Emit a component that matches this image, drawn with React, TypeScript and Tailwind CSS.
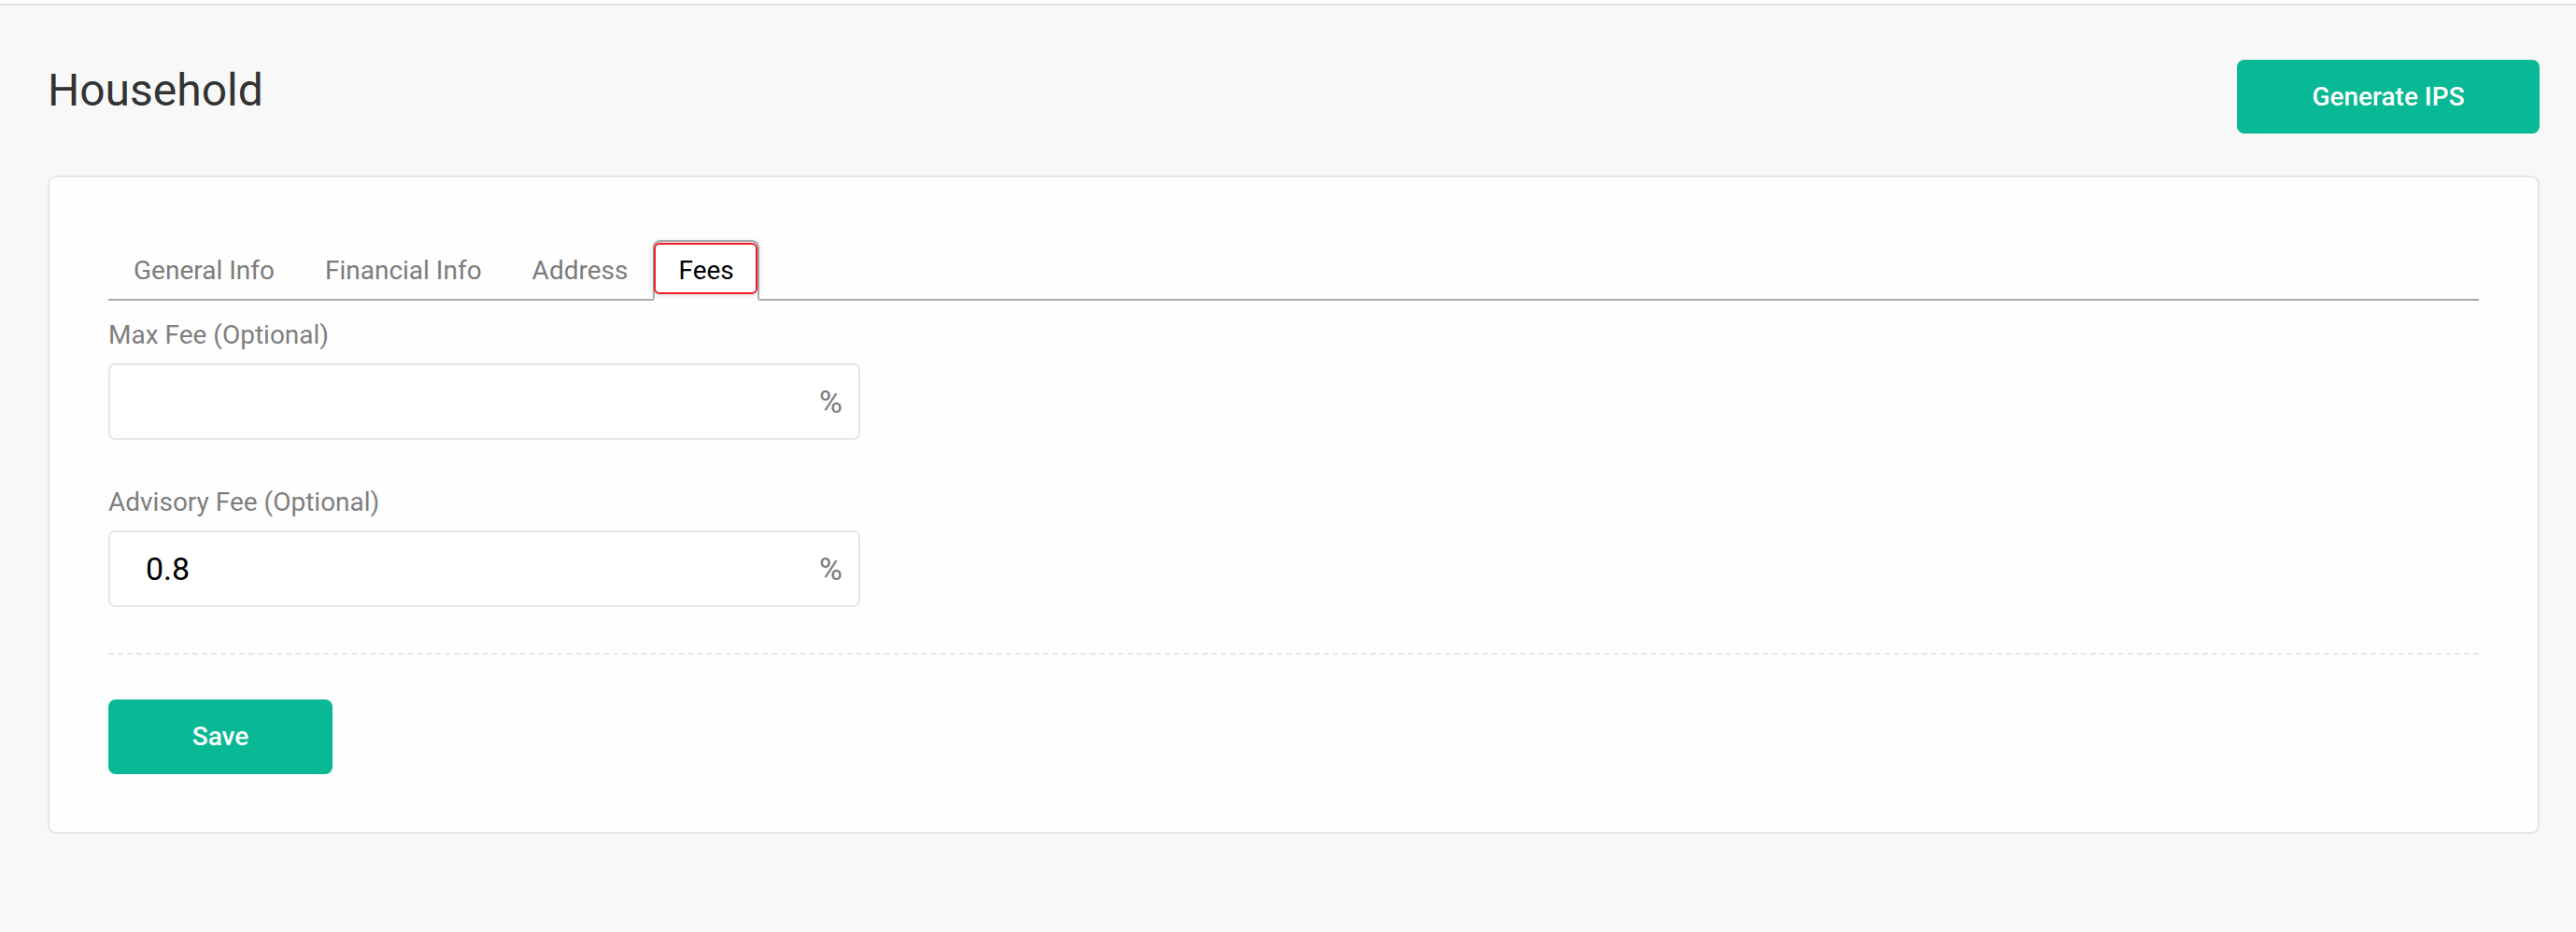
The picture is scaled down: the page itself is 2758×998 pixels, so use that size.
import { useState } from 'react';

const tabs = ['General Info', 'Financial Info', 'Address', 'Fees'];

function FeeInput({ label, value }: { label: string; value: string }) {
  return (
    <div>
      <label className="block text-[28px] leading-none text-[#7f7f7f]">{label}</label>
      <div className="mt-[16px] flex h-[82px] w-[805px] items-center rounded-[7px] border-2 border-[#e6e6e6] bg-white pl-[38px] pr-[17px]">
        <input
          defaultValue={value}
          className="min-w-0 flex-1 bg-transparent text-[34px] leading-none text-black outline-none"
        />
        <span className="text-[34px] leading-none text-[#7a7a7a]">%</span>
      </div>
    </div>
  );
}

export default function App() {
  const [active, setActive] = useState('Fees');

  return (
    <div className="min-h-screen bg-[#f8f8f8] font-['Roboto',sans-serif]">
      {/* top edge */}
      <div className="h-[4px] bg-[#fafafa]" />
      <div className="h-[2px] bg-[#e3e3e3]" />

      <div className="ml-[51px] mr-[39px]">
        {/* Header */}
        <div className="flex items-start justify-between pt-[58px] mb-[45px]">
          <h1 className="mt-[9px] text-[48px] font-normal leading-none text-[#333333]">Household</h1>
          <button className="h-[79px] w-[324px] rounded-[8px] bg-[#09b894] text-[28px] font-medium text-white">
            Generate IPS
          </button>
        </div>

        {/* Card */}
        <div className="rounded-[9px] border-2 border-[#e6e6e6] bg-[#fefefe] px-[63px] pt-[67px] pb-[62px]">
          {/* Tabs */}
          <div className="flex border-b-2 border-[#a8a8a8]">
            {tabs.map((tab) => {
              const isActive = tab === active;
              return (
                <button
                  key={tab}
                  type="button"
                  onClick={() => setActive(tab)}
                  className={`relative -mb-[2px] border-2 px-[25px] pt-[17px] pb-[16px] text-[28px] leading-none ${
                    isActive
                      ? 'rounded-t-[8px] border-[#b0b0b0] border-b-white bg-white text-black'
                      : 'border-transparent text-[#7c7c7c]'
                  }`}
                >
                  {isActive && (
                    <span className="absolute -left-[1px] right-0 top-[1px] bottom-[5px] rounded-[6px] border-2 border-[#ee1c25] shadow-[0_0_5px_2px_rgba(0,0,0,0.12)]" />
                  )}
                  <span className="relative">{tab}</span>
                </button>
              );
            })}
          </div>

          {/* Fields */}
          <div className="mt-[23px]">
            <FeeInput label="Max Fee (Optional)" value="" />
          </div>
          <div className="mt-[53px]">
            <FeeInput label="Advisory Fee (Optional)" value="0.8" />
          </div>

          <div className="mt-[49px] border-t-2 border-dashed border-[#e6e6e6]" />

          <button className="mt-[48px] h-[80px] w-[240px] rounded-[8px] bg-[#09b894] text-[28px] font-medium text-white">
            Save
          </button>
        </div>
      </div>
    </div>
  );
}
